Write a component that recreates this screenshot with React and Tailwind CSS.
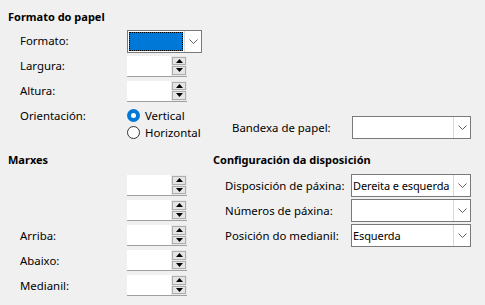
import React from "react";

const font = { fontFamily: '"Noto Sans", "Open Sans", sans-serif' };

function Chevron() {
  return (
    <svg width="9" height="5" viewBox="0 0 9 5" className="block">
      <path d="M0.5 0.5 L4.5 4.5 L8.5 0.5" fill="none" stroke="#606060" strokeWidth="1" />
    </svg>
  );
}

function Spin() {
  return (
    <div className="flex w-[60px] h-[21px] border-b border-[#a0a0a0] bg-white">
      <div className="flex-1 bg-white" />
      <div className="w-[16px] flex flex-col gap-[1px] bg-[#e8e8e8] p-[1px]">
        <div className="flex-1 border border-[#adadad] bg-[#e5e5e5] flex items-center justify-center">
          <svg width="7" height="4" viewBox="0 0 7 4"><path d="M0 4 L3.5 0 L7 4 Z" fill="#000" /></svg>
        </div>
        <div className="flex-1 border border-[#adadad] bg-[#e5e5e5] flex items-center justify-center">
          <svg width="7" height="4" viewBox="0 0 7 4"><path d="M0 0 L3.5 4 L7 0 Z" fill="#000" /></svg>
        </div>
      </div>
    </div>
  );
}

function Combo({ text, w = 120, focus = false }) {
  return (
    <div className="flex h-[23px] border border-[#7a7a7a] bg-white" style={{ width: w }}>
      {focus ? (
        <div className="flex-1 p-[1px]">
          <div className="h-full bg-[#0078d7] outline outline-1 outline-dotted outline-black -outline-offset-1" />
        </div>
      ) : (
        <div className="flex-1 min-w-0 flex items-center pl-[1px] text-[11px] tracking-[-0.1px] text-black leading-none whitespace-nowrap">{text}</div>
      )}
      <div className="w-[17px] shrink-0 border-l border-[#d9d9d9] flex items-center justify-center">
        <Chevron />
      </div>
    </div>
  );
}

function Radio({ checked, label }) {
  return (
    <div className="flex items-center gap-[5px] h-[17px]">
      {checked ? (
        <div className="w-[13px] h-[13px] rounded-full bg-[#0078d7] flex items-center justify-center">
          <div className="w-[5px] h-[5px] rounded-full bg-white" />
        </div>
      ) : (
        <div className="w-[13px] h-[13px] rounded-full border border-[#333] bg-white" />
      )}
      <span>{label}</span>
    </div>
  );
}

export default function App() {
  return (
    <div className="w-[485px] h-[305px] bg-[#f0f0f0] text-black text-[11.4px] overflow-hidden whitespace-nowrap" style={font}>
      <div className="pt-[9px] pl-[8px] font-bold text-[11px] leading-[16px]">Formato do papel</div>
      <div className="pl-[20px] mt-[5px] flex flex-col gap-[3px]">
        <div className="flex items-center h-[22px]">
          <div className="w-[107px]">Formato:</div>
          <Combo w={75} focus />
        </div>
        <div className="flex items-center h-[22px]">
          <div className="w-[107px]">Largura:</div>
          <Spin />
        </div>
        <div className="flex items-center h-[22px]">
          <div className="w-[107px]">Altura:</div>
          <Spin />
        </div>
        <div className="flex mt-[2px]">
          <div className="w-[107px] leading-[17px]">Orientación:</div>
          <div className="flex flex-col w-[76px]">
            <Radio checked label="Vertical" />
            <Radio label="Horizontal" />
          </div>
          <div className="flex items-center ml-[29px] mt-[9px] h-[23px]">
            <div className="w-[120px]">Bandexa de papel:</div>
            <Combo w={119} />
          </div>
        </div>
      </div>
      <div className="flex mt-[11px]">
        <div className="w-[205px] pl-[8px]">
          <div className="font-bold text-[11px] leading-[16px]">Marxes</div>
          <div className="flex flex-col gap-[4px] mt-[7px] pl-[12px]">
            {["", "", "Arriba:", "Abaixo:", "Medianil:"].map((l, i) => (
              <div key={i} className="flex items-center h-[21px]">
                <div className="w-[107px]">{l}</div>
                <Spin />
              </div>
            ))}
          </div>
        </div>
        <div className="pl-[8px]">
          <div className="font-bold text-[11px] leading-[16px]">Configuración da disposición</div>
          <div className="flex flex-col gap-[2px] mt-[6px] pl-[12px]">
            {[["Disposición de páxina:", "Dereita e esquerda"], ["Números de páxina:", ""], ["Posición do medianil:", "Esquerda"]].map(([l, v], i) => (
              <div key={i} className="flex items-center h-[23px]">
                <div className="w-[126px]">{l}</div>
                <Combo w={120} text={v} />
              </div>
            ))}
          </div>
        </div>
      </div>
    </div>
  );
}
